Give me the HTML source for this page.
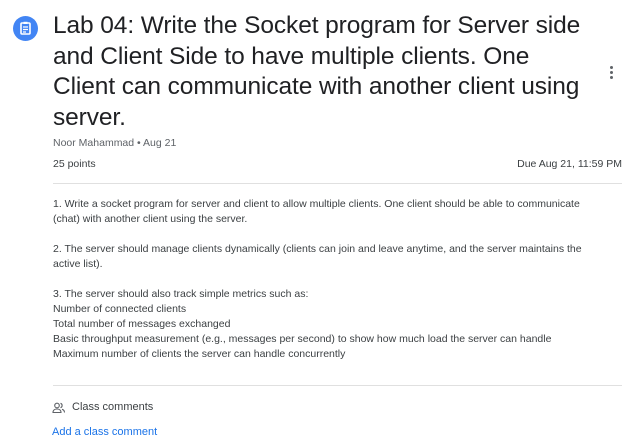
<html><head><style>
body{margin:0;width:643px;height:447px;background:#fff;font-family:"Liberation Sans",Arial,sans-serif;position:relative;overflow:hidden}
.t{position:absolute;left:53px;top:11px;white-space:nowrap;font-size:24.5px;line-height:30.5px;color:#202124;letter-spacing:-0.1px}
.ic{position:absolute;left:13px;top:16px;width:25px;height:25px;border-radius:50%;background:#4285f4}
.m{position:absolute;font-size:11px;color:#5f6368}
.b{position:absolute;left:53px;top:197px;white-space:nowrap;font-size:10.5px;line-height:15px;color:#3c4043}
.hr{position:absolute;left:53px;width:569px;height:1px;background:#e0e0e0}
</style></head><body>
<div class="ic"><svg width="25" height="25" viewBox="0 0 25 25"><rect x="8" y="7" width="9" height="11" rx="1" fill="none" stroke="#fff" stroke-width="1.6"/><rect x="10.5" y="5.8" width="4" height="2.2" fill="#fff"/><path d="M10 11h5M10 13.5h5M10 16h3" stroke="#fff" stroke-width="1.2"/></svg></div>
<div class="t">Lab 04: Write the Socket program for Server side<br>and Client Side to have multiple clients. One<br>Client can communicate with another client using<br>server.</div>
<div style="position:absolute;left:610px;top:66px;width:3px"><div style="width:3px;height:3px;border-radius:50%;background:#5f6368;margin-bottom:2px"></div><div style="width:3px;height:3px;border-radius:50%;background:#5f6368;margin-bottom:2px"></div><div style="width:3px;height:3px;border-radius:50%;background:#5f6368"></div></div>
<div class="m" style="left:53px;top:137px;font-size:10.5px">Noor Mahammad • Aug 21</div>
<div class="m" style="left:53px;top:158px;color:#3c4043;font-size:10.5px">25 points</div>
<div class="m" style="right:21px;top:158px;color:#3c4043;font-size:10.5px">Due Aug 21, 11:59 PM</div>
<div class="hr" style="top:183px"></div>
<div class="b">1. Write a socket program for server and client to allow multiple clients. One client should be able to communicate<br>(chat) with another client using the server.<br><br>2. The server should manage clients dynamically (clients can join and leave anytime, and the server maintains the<br>active list).<br><br>3. The server should also track simple metrics such as:<br>Number of connected clients<br>Total number of messages exchanged<br>Basic throughput measurement (e.g., messages per second) to show how much load the server can handle<br>Maximum number of clients the server can handle concurrently</div>
<div class="hr" style="top:385px"></div>
<svg style="position:absolute;left:52px;top:402px" width="14" height="12" viewBox="0 0 14 12"><circle cx="5" cy="3.5" r="2.3" fill="none" stroke="#5f6368" stroke-width="1.1"/><path d="M1 10.5c0-2.5 2-3.5 4-3.5s4 1 4 3.5zM8.5 1.3a2.3 2.3 0 0 1 0 4.4M10 7.3c1.5.4 2.5 1.5 2.5 3.2" fill="none" stroke="#5f6368" stroke-width="1.1"/></svg>
<div class="m" style="left:72px;top:401px;font-size:11px;color:#3c4043">Class comments</div>
<div class="m" style="left:52px;top:426px;font-size:11px;color:#1a73e8">Add a class comment</div>
</body></html>
